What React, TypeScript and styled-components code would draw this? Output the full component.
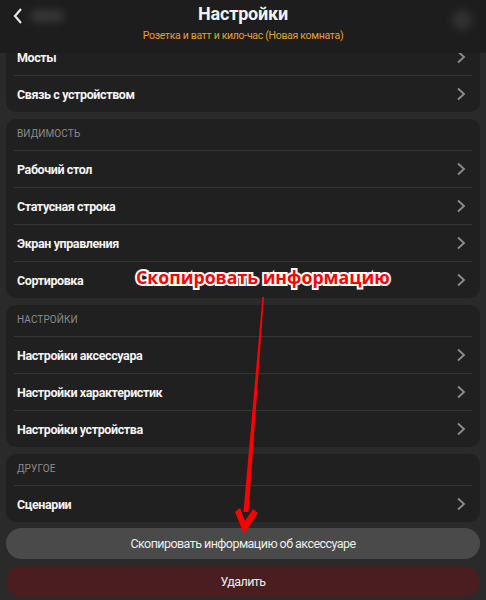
import React from "react";
import styled, { createGlobalStyle } from "styled-components";

const GlobalStyle = createGlobalStyle`
    html, body {
        margin: 0;
        padding: 0;
        background: #2a2a2a;
    }
    body {
        font-family: Roboto, "Liberation Sans", Arial, sans-serif;
        -webkit-font-smoothing: antialiased;
    }
`;

const Page = styled.div`
    position: relative;
    width: 486px;
    height: 600px;
    overflow: hidden;
    background: #2a2a2a;
`;

const Header = styled.header`
    position: absolute;
    top: 0;
    left: 0;
    right: 0;
    height: 53px;
    background: #1d1d1d;
    z-index: 2;
    display: flex;
    flex-direction: column;
    align-items: center;
`;

const Title = styled.h1`
    margin: 3px 0 0;
    font-size: 18px;
    font-weight: 700;
    letter-spacing: -0.2px;
    color: #f2f2f2;
    line-height: 22px;
`;

const Subtitle = styled.div`
    margin-top: 4px;
    font-size: 10.5px;
    letter-spacing: -0.3px;
    color: #e5a033;
    line-height: 14px;
`;

const BackButton = styled.div`
    position: absolute;
    left: 12px;
    top: 7px;
    display: flex;
    align-items: center;
    gap: 6px;
`;

const Blur = styled.div<{ $w: number; $h: number }>`
    width: ${({ $w }) => $w}px;
    height: ${({ $h }) => $h}px;
    border-radius: ${({ $h }) => $h / 2}px;
    background: #4a4a4a;
    filter: blur(5px);
    opacity: 0.7;
`;

const RightBlur = styled.div`
    position: absolute;
    right: 14px;
    top: 10px;
    width: 20px;
    height: 20px;
    border-radius: 50%;
    background: #333;
    filter: blur(4px);
`;

const Content = styled.main`
    padding: 38px 6px 0;
    display: flex;
    flex-direction: column;
    gap: 7px;
`;

const Card = styled.section`
    background: #202020;
    border-radius: 10px;
    padding: 0 8px;
`;

const SectionTitle = styled.div`
    height: 31px;
    box-sizing: border-box;
    padding: 9px 0 0 3px;
    font-size: 10px;
    letter-spacing: 0.1px;
    color: #8c8c8c;
    text-transform: uppercase;
`;

const Row = styled.div<{ $first?: boolean }>`
    height: 37px;
    box-sizing: border-box;
    display: flex;
    align-items: center;
    justify-content: space-between;
    padding: 0 6px 0 3px;
    border-top: 1px solid ${({ $first }) => ($first ? "transparent" : "#353535")};
    font-size: 12.5px;
    font-weight: 700;
    letter-spacing: -0.4px;
    color: #f4f4f4;
`;

const Actions = styled.div`
    display: flex;
    flex-direction: column;
    gap: 7px;
    margin-top: -1px;
`;

const Pill = styled.button<{ $danger?: boolean }>`
    height: 31px;
    border: none;
    border-radius: 16px;
    background: ${({ $danger }) => ($danger ? "#4a1e21" : "#4a4a4a")};
    color: #ededed;
    font-family: inherit;
    font-size: 12.5px;
    font-weight: 400;
    letter-spacing: -0.55px;
`;

const Callout = styled.div`
    position: absolute;
    left: 136px;
    top: 265px;
    font-family: "Open Sans", "Noto Sans", sans-serif;
    font-size: 17.7px;
    font-weight: 700;
    color: #ff0000;
    -webkit-text-stroke: 4px #ffffff;
    paint-order: stroke fill;
    z-index: 3;
    white-space: nowrap;
`;

const Overlay = styled.svg`
    position: absolute;
    inset: 0;
    z-index: 3;
    pointer-events: none;
`;

const Chevron = () => (
    <svg width="10" height="14" viewBox="0 0 10 14">
        <path d="M2 1.5 L8 7 L2 12.5" fill="none" stroke="#8e8e8e" strokeWidth="1.8" />
    </svg>
);

const Item = ({ label, first }: { label: string; first?: boolean }) => (
    <Row $first={first}>
        <span>{label}</span>
        <Chevron />
    </Row>
);

const sections = [
    {
        title: "Видимость",
        items: ["Рабочий стол", "Статусная строка", "Экран управления", "Сортировка"],
    },
    {
        title: "Настройки",
        items: ["Настройки аксессуара", "Настройки характеристик", "Настройки устройства"],
    },
    { title: "Другое", items: ["Сценарии"] },
];

export default function App() {
    return (
        <Page>
            <GlobalStyle />
            <Header>
                <BackButton>
                    <svg width="12" height="18" viewBox="0 0 12 18">
                        <path d="M9 2 L3 9 L9 16" fill="none" stroke="#e6e6e6" strokeWidth="2.2" />
                    </svg>
                    <Blur $w={34} $h={10} />
                </BackButton>
                <RightBlur />
                <Title>Настройки</Title>
                <Subtitle>Розетка и ватт и кило-час (Новая комната)</Subtitle>
            </Header>

            <Content>
                <Card>
                    <Item label="Мосты" first />
                    <Item label="Связь с устройством" />
                </Card>
                {sections.map(({ title, items }) => (
                    <Card key={title}>
                        <SectionTitle>{title}</SectionTitle>
                        {items.map((label) => (
                            <Item key={label} label={label} />
                        ))}
                    </Card>
                ))}
                <Actions>
                    <Pill>Скопировать информацию об аксессуаре</Pill>
                    <Pill $danger>Удалить</Pill>
                </Actions>
            </Content>

            <Callout>Скопировать информацию</Callout>
            <Overlay width="486" height="600" viewBox="0 0 486 600">
                <polygon points="262.5,297 264,297 248.5,512 243.5,512" fill="#ff0000" />
                <polygon
                    points="235,512 240,508 245,521 253,509 258,513 244,534"
                    fill="#ff0000"
                />
            </Overlay>
        </Page>
    );
}
